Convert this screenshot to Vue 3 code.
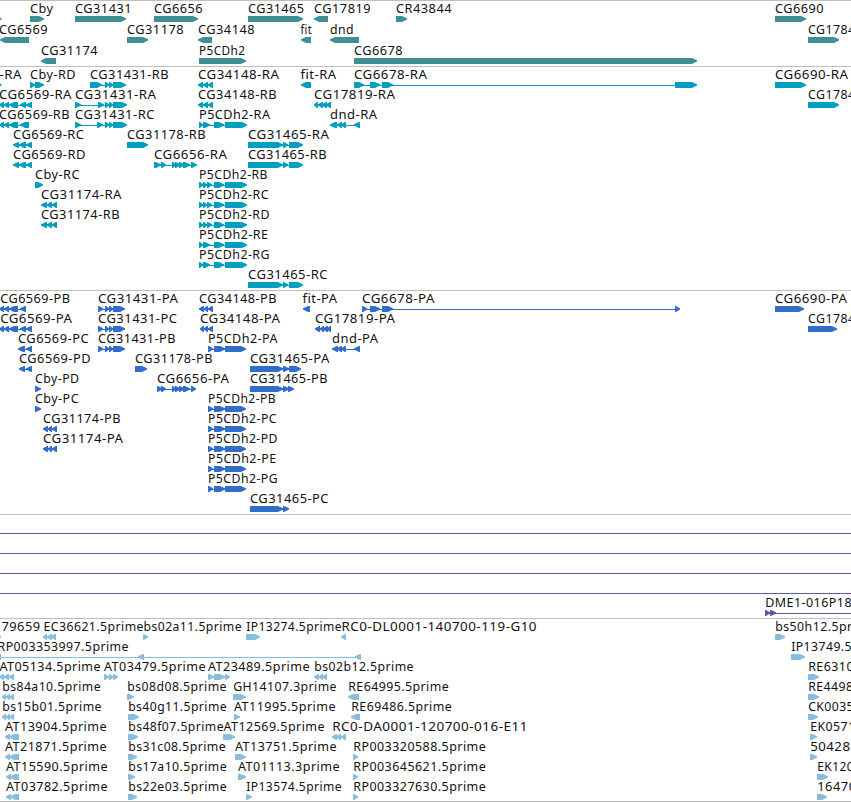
<script setup>
const HEAD = 6

// Feature: [row, label, label start, label end, strand, [[from, to], ...]]
const p5a = [[199, 203], [203, 210], [214, 224], [225, 247]]
const p5b = [[199, 203], [203, 207], [207, 212], [214, 224], [225, 247]]
const p5p = [[208, 213], [214, 225], [225, 246]]
const r31465 = [[248, 283], [283, 288], [289, 303]]
const r6569 = [[-1, 4], [4, 9], [9, 18], [20, 26], [26, 32]]
const r6569c = [[13, 19], [19, 26], [26, 32]]
const r34148 = [[198, 203], [203, 208], [208, 213]]
const r31174 = [[41, 47], [47, 52], [52, 57]]
const p31431 = [[98, 103], [105, 109], [109, 113], [113, 125]]
const p31174 = [[43, 48], [48, 52], [52, 57]]

const genes = [
  [0, '', 0, 0, 1, [[-8, 1.5]]],
  [0, 'Cby', 30.5, 53, 1, [[30, 44]]],
  [0, 'CG31431', 75.5, 131.5, 1, [[75, 126]]],
  [0, 'CG6656', 154.5, 202.5, 1, [[154, 198]]],
  [0, 'CG31465', 248.5, 304, 1, [[248, 303]]],
  [0, 'CG17819', 314.5, 370.5, -1, [[314, 328]]],
  [0, 'CR43844', 396.5, 451.5, 1, [[396, 407]]],
  [0, 'CG6690', 775.5, 823.5, 1, [[775, 806]]],
  [1, 'CG6569', -0.5, 47.5, -1, [[0, 29]]],
  [1, 'CG31178', 127.5, 183.5, 1, [[127, 148]]],
  [1, 'CG34148', 198.5, 254.5, -1, [[198, 212]]],
  [1, 'fit', 301, 311.5, -1, [[301, 311]]],
  [1, 'dnd', 330.5, 353.5, -1, [[330, 359]]],
  [1, 'CG1784', 808.5, 855, 1, [[808, 839]]],
  [2, 'CG31174', 41.5, 97.5, -1, [[41, 56]]],
  [2, 'P5CDh2', 199.5, 245, 1, [[199, 246]]],
  [2, 'CG6678', 354.5, 402.5, 1, [[354, 697]]],
]

const transcripts = [
  [0, '-RA', 0, 21.5, 1, [[-8, 1.5]]],
  [0, 'Cby-RD', 30.5, 75.5, 1, [[30, 35], [35, 44]]],
  [0, 'CG31431-RB', 90.5, 168.5, 1, [[90, 102], [105, 109], [109, 113], [113, 126]]],
  [0, 'CG34148-RA', 198.5, 279, -1, r34148],
  [0, 'fit-RA', 301, 336, -1, [[301, 311]]],
  [0, 'CG6678-RA', 354.5, 427, 1, [[354, 364], [370, 380], [382, 393], [675, 697]]],
  [0, 'CG6690-RA', 775.5, 848, 1, [[775, 806]]],
  [1, 'CG6569-RA', -0.5, 71.5, -1, r6569],
  [1, 'CG31431-RA', 75.5, 156, 1, [[75, 81], [98, 104], [105, 109], [109, 113], [113, 127]]],
  [1, 'CG34148-RB', 198.5, 276.5, -1, r34148],
  [1, 'CG17819-RA', 314.5, 395, -1, [[314, 318], [318, 323], [322, 327], [326, 331]]],
  [1, 'CG1784', 808.5, 855, 1, [[808, 839]]],
  [2, 'CG6569-RB', -0.5, 69.5, -1, [[-1, 4], [4, 9], [9, 18], [20, 29]]],
  [2, 'CG31431-RC', 75.5, 154.5, 1, [[75, 81], [97, 103], [105, 109], [109, 113], [113, 127]]],
  [2, 'P5CDh2-RA', 199.5, 270, 1, p5a],
  [2, 'dnd-RA', 330.5, 377, -1, [[330, 337], [337, 342], [341, 346], [354, 360]]],
  [3, 'CG6569-RC', 13.5, 84, -1, r6569c],
  [3, 'CG31178-RB', 127.5, 205.5, 1, [[127, 148]]],
  [3, 'CG31465-RA', 248.5, 329, 1, r31465],
  [4, 'CG6569-RD', 13.5, 85.5, -1, r6569c],
  [4, 'CG6656-RA', 154.5, 227, 1, [[154, 161], [161, 166], [172, 176], [175, 180], [179, 184], [183, 190], [191, 197]]],
  [4, 'CG31465-RB', 248.5, 326.5, 1, r31465],
  [5, 'Cby-RC', 35.5, 79.5, 1, [[35, 43]]],
  [5, 'P5CDh2-RB', 199.5, 267.5, 1, p5b],
  [6, 'CG31174-RA', 41.5, 121.5, -1, r31174],
  [6, 'P5CDh2-RC', 199.5, 268.5, 1, p5b],
  [7, 'CG31174-RB', 41.5, 119.5, -1, r31174],
  [7, 'P5CDh2-RD', 199.5, 269.5, 1, p5b],
  [8, 'P5CDh2-RE', 199.5, 268, 1, p5a],
  [9, 'P5CDh2-RG', 199.5, 269.5, 1, p5a],
  [10, 'CG31465-RC', 248.5, 327.5, 1, r31465],
]

const proteins = [
  [0, 'CG6569-PB', 0.7, 70, -1, [[-1, 4], [4, 9], [9, 18], [20, 26]]],
  [0, 'CG31431-PA', 98.5, 178, 1, p31431],
  [0, 'CG34148-PB', 199.5, 276.5, -1, [[199, 204], [204, 208], [208, 213]]],
  [0, 'fit-PA', 303, 337, -1, [[303, 310]]],
  [0, 'CG6678-PA', 362.5, 434.5, 1, [[362, 367], [370, 380], [382, 393], [675, 680]]],
  [0, 'CG6690-PA', 775.5, 847, 1, [[775, 804]]],
  [1, 'CG6569-PA', 0.7, 72, -1, r6569],
  [1, 'CG31431-PC', 98.5, 177, 1, p31431],
  [1, 'CG34148-PA', 200.5, 280, -1, [[200, 204], [204, 208], [208, 213]]],
  [1, 'CG17819-PA', 315.5, 395, -1, [[315, 320], [320, 324], [323, 328], [327, 331]]],
  [1, 'CG1784', 808.5, 855, 1, [[808, 837]]],
  [2, 'CG6569-PC', 18.5, 88.5, -1, [[18, 25], [26, 32]]],
  [2, 'CG31431-PB', 98.5, 175.5, 1, p31431],
  [2, 'P5CDh2-PA', 208.5, 277.5, 1, p5p],
  [2, 'dnd-PA', 332.5, 378, -1, [[332, 338], [337, 342], [341, 346], [354, 360]]],
  [3, 'CG6569-PD', 19.5, 90.5, -1, [[19, 25], [26, 32]]],
  [3, 'CG31178-PB', 135.5, 212.5, 1, [[135, 147]]],
  [3, 'CG31465-PA', 250.5, 329.5, 1, [[250, 283], [283, 289], [289, 301]]],
  [4, 'Cby-PD', 35.5, 79, 1, [[35, 41]]],
  [4, 'CG6656-PA', 157.5, 229, 1, [[157, 162], [161, 166], [172, 176], [175, 180], [179, 184], [183, 190], [191, 196]]],
  [4, 'CG31465-PB', 250.5, 327.5, 1, [[250, 283], [283, 289], [288, 294]]],
  [5, 'Cby-PC', 35.5, 78.5, 1, [[35, 41]]],
  [5, 'P5CDh2-PB', 208.5, 275.5, 1, p5p],
  [6, 'CG31174-PB', 43.5, 120.5, -1, p31174],
  [6, 'P5CDh2-PC', 208.5, 276.5, 1, p5p],
  [7, 'CG31174-PA', 43.5, 123, -1, p31174],
  [7, 'P5CDh2-PD', 208.5, 277.5, 1, p5p],
  [8, 'P5CDh2-PE', 208.5, 276, 1, p5p],
  [9, 'P5CDh2-PG', 208.5, 277.5, 1, p5p],
  [10, 'CG31465-PC', 250.5, 328.5, 1, [[250, 283], [283, 289]]],
]

const span = [[-10, 870]]
const clones = [
  [0, '', 0, 0, 0, span],
  [1, '', 0, 0, 0, span],
  [2, '', 0, 0, 0, span],
  [3, '', 0, 0, 0, span],
  [4, 'DME1-016P18', 765.7, 851.5, 1, [[765, 770], [770, 776], [870, 880]]],
]

const ests = [
  [0, '79659', 2, 40, 1, [[-8, 1]]],
  [0, 'EC36621.5prime', 44, 143.5, -1, [[43, 47], [47, 52], [51, 56]]],
  [0, 'bs02a11.5prime', 144, 241.5, 1, [[143, 148]]],
  [0, 'IP13274.5prime', 246.7, 341.5, 1, [[246, 260]]],
  [0, 'RC0-DL0001-140700-119-G10', 342, 536.5, -1, [[341, 346]]],
  [0, 'bs50h12.5pr', 775.7, 852, 1, [[775, 785]]],
  [1, 'RP003353997.5prime', -2, 128.5, -1, [[-5, 1], [138, 144], [355, 361]]],
  [1, 'IP13749.5', 791.7, 851.5, 1, [[791, 805]]],
  [2, 'AT05134.5prime', 0, 100.5, -1, [[-1, 4], [4, 9], [9, 14]]],
  [2, 'AT03479.5prime', 104.5, 205.5, 1, [[104, 109], [109, 113], [113, 118]]],
  [2, 'AT23489.5prime', 208.5, 309.5, 1, [[208, 214], [214, 225], [225, 230]]],
  [2, 'bs02b12.5prime', 314.7, 413.5, -1, [[314, 319], [319, 323], [322, 327]]],
  [2, 'RE6310', 808.7, 853.5, 1, [[808, 819]]],
  [3, 'bs84a10.5prime', 2.7, 100.5, -1, [[2, 6], [6, 10], [10, 14]]],
  [3, 'bs08d08.5prime', 127.7, 226.5, 1, [[127, 134]]],
  [3, 'GH14107.3prime', 233.7, 336.5, 1, [[233, 246]]],
  [3, 'RE64995.5prime', 348.7, 448.7, -1, [[348, 359]]],
  [3, 'RE4498', 808.7, 853, 1, [[808, 819]]],
  [4, 'bs15b01.5prime', 2.7, 101.5, -1, [[2, 6], [6, 10], [10, 14]]],
  [4, 'bs40g11.5prime', 128.7, 226.5, 1, [[128, 139]]],
  [4, 'AT11995.5prime', 234.5, 335.5, 1, [[234, 240]]],
  [4, 'RE69486.5prime', 351.7, 451.7, -1, [[351, 360]]],
  [4, 'CK0035', 808.7, 853.5, 1, [[808, 818]]],
  [5, 'AT13904.5prime', 5.5, 106.5, -1, [[5, 10], [9, 19]]],
  [5, 'bs48f07.5prime', 128.7, 223.5, 1, [[128, 138]]],
  [5, 'AT12569.5prime', 224, 324.5, 1, [[223, 235]]],
  [5, 'RC0-DA0001-120700-016-E11', 332.7, 527.5, -1, [[332, 337], [336, 341], [341, 346]]],
  [5, 'EK0571', 810.7, 855, 1, [[810, 817]]],
  [6, 'AT21871.5prime', 5.5, 106.5, -1, [[5, 10], [9, 19]]],
  [6, 'bs31c08.5prime', 128.7, 225.5, 1, [[128, 137]]],
  [6, 'AT13751.5prime', 235.5, 336.5, 1, [[235, 246]]],
  [6, 'RP003320588.5prime', 353.7, 485.7, 1, [[353, 358]]],
  [6, '50428', 810.7, 850, 1, [[810, 817]]],
  [7, 'AT15590.5prime', 6.5, 107.5, -1, [[6, 11], [10, 19]]],
  [7, 'bs17a10.5prime', 128.7, 226.5, 1, [[128, 135]]],
  [7, 'AT01113.3prime', 238.5, 339.5, 1, [[238, 246]]],
  [7, 'RP003645621.5prime', 353.7, 485.7, 1, [[353, 358]]],
  [7, 'EK120', 817.7, 853.5, 1, [[817, 828]]],
  [8, 'AT03782.5prime', 6.5, 107.5, -1, [[6, 11], [10, 19]]],
  [8, 'bs22e03.5prime', 128.7, 226.5, 1, [[128, 137]]],
  [8, 'IP13574.5prime', 246.7, 341.5, 1, [[246, 252]]],
  [8, 'RP003327630.5prime', 353.7, 485.7, 1, [[353, 358]]],
  [8, '16470', 817.7, 856, 1, [[817, 827]]],
]

// first = top of the first row's bar inside the track
const tracks = [
  { name: 'genes', height: 66, first: 16, pitch: 21, features: genes },
  { name: 'transcripts', height: 224, first: 16, pitch: 20, features: transcripts },
  { name: 'proteins', height: 224, first: 16, pitch: 20, features: proteins },
  { name: 'clones', height: 104, first: 16, pitch: 20, features: clones },
  { name: 'ests', height: 183, first: 16, pitch: 20, features: ests },
]

// Flat bar ending in a slightly blunted head, pointing along the strand
function arrow([a, b], dir, y) {
  const h = Math.min(HEAD, b - a)
  const [tail, tip] = dir > 0 ? [a, b] : [b, a]
  const neck = tip - dir * h
  return [
    [tail, y],
    [neck + dir, y],
    [tip, y + 2.2],
    [tip, y + 3.4],
    [neck + dir, y + 6],
    [tail, y + 6],
  ].map((p) => p.join(',')).join(' ')
}

const view = tracks.map((t) => ({
  ...t,
  items: t.features.map(([row, label, x, end, dir, segs]) => {
    const y = t.first + row * t.pitch
    return {
      label,
      x: x - 0.5,
      length: end - x + 1,
      base: y - 3,
      lineY: y + 3,
      from: segs[0][0] + 1,
      width: segs[segs.length - 1][1] - segs[0][0] - 2,
      hasLine: segs.length > 1 || dir === 0,
      arrows: dir === 0 ? [] : segs.map((s) => arrow(s, dir, y)),
    }
  }),
}))
</script>

<template>
  <main class="browser">
    <section v-for="t in view" :key="t.name" class="track" :class="t.name">
      <svg class="lane" width="851" :height="t.height">
        <rect class="divider" x="0" y="0" width="851" height="1" />
        <g v-for="(f, i) in t.items" :key="i">
          <rect v-if="f.hasLine" class="mark" :x="f.from" :y="f.lineY" :width="f.width" height="1" />
          <polygon v-for="(p, j) in f.arrows" :key="j" class="mark" :points="p" />
          <text v-if="f.label" class="label" :x="f.x" :y="f.base" :textLength="f.length" lengthAdjust="spacingAndGlyphs">{{ f.label }}</text>
        </g>
      </svg>
    </section>
    <div class="bottom"></div>
  </main>
</template>

<style>
body {
  margin: 0;
  background: #fff;
}
</style>

<style scoped>
.browser {
  display: flex;
  flex-direction: column;
  width: 851px;
  height: 802px;
  overflow: hidden;
  background: #fff;
}
.track {
  flex: none;
}
.lane {
  display: block;
  overflow: hidden;
}
.divider {
  fill: #bebebe;
}
.bottom {
  height: 1px;
  background: #bebebe;
}
.label {
  font-family: "Noto Sans", "Open Sans", sans-serif;
  font-size: 12.4px;
  letter-spacing: 0.45px;
  fill: #111;
}
.genes .mark {
  fill: #408f94;
}
.transcripts .mark {
  fill: #009fc0;
}
.proteins .mark {
  fill: #316dcb;
}
.clones .mark {
  fill: #6f51a3;
}
.ests .mark {
  fill: #88bddd;
}
</style>
